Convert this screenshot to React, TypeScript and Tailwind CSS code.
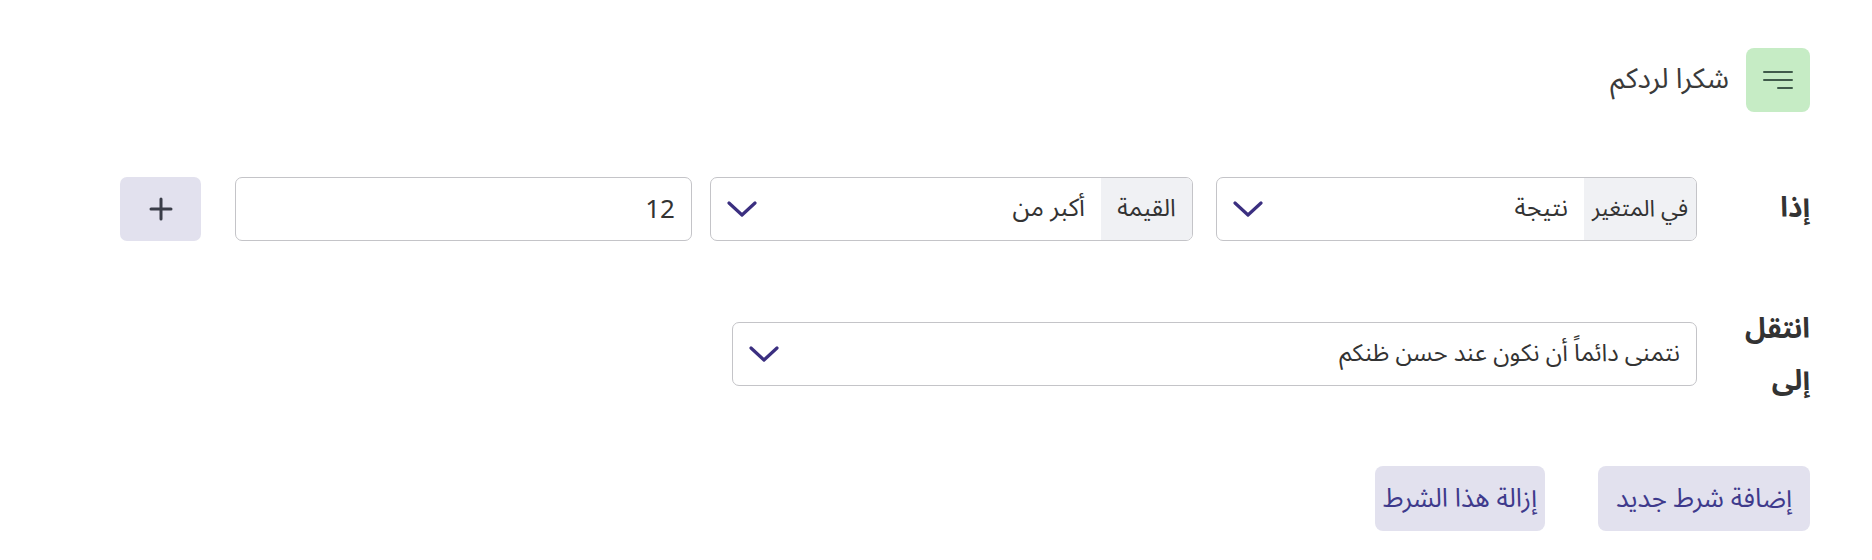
import React from "react";

const font = { fontFamily: '"Noto Sans Arabic", "Noto Sans", "DejaVu Sans", sans-serif' };

function Chevron() {
  return (
    <svg width="30" height="16" viewBox="0 0 30 16" fill="none">
      <path d="M2 2 L15 14 L28 2" stroke="#3b2f80" strokeWidth="3.2" strokeLinecap="round" strokeLinejoin="round" />
    </svg>
  );
}

export default function App() {
  return (
    <div dir="rtl" className="w-[1872px] h-[560px] bg-white pt-[48px] pr-[62px] text-[#333]" style={font}>
      <div className="flex items-center gap-[17px]">
        <div className="w-[64px] h-[64px] rounded-[8px] bg-[#c6ecc5] flex items-center justify-center">
          <svg width="30" height="20" viewBox="0 0 30 20" fill="none">
            <path d="M1 2 H29 M1 10 H29 M15 18 H29" stroke="#3f5a4a" strokeWidth="2" strokeLinecap="round" />
          </svg>
        </div>
        <div className="text-[28px] text-[#3a3a3a]">شكرا لردكم</div>
      </div>

      <div className="flex items-center mt-[65px]">
        <div className="w-[113px] text-[28px] font-bold text-[#333]">إذا</div>
        <div className="w-[481px] h-[64px] border border-[#c4c4c8] rounded-[7px] flex items-stretch overflow-hidden">
          <div className="w-[112px] bg-[#f0f1f4] flex items-center justify-center text-[23px] text-[#333]">في المتغير</div>
          <div className="flex-1 flex items-center justify-between pr-[16px] pl-[16px]">
            <span className="text-[25px] text-[#333]">نتيجة</span>
            <Chevron />
          </div>
        </div>
        <div className="w-[483px] h-[64px] mr-[23px] border border-[#c4c4c8] rounded-[7px] flex items-stretch overflow-hidden">
          <div className="w-[91px] bg-[#f0f1f4] flex items-center justify-center text-[24px] text-[#333]">القيمة</div>
          <div className="flex-1 flex items-center justify-between pr-[16px] pl-[16px]">
            <span className="text-[25px] text-[#333]">أكبر من</span>
            <Chevron />
          </div>
        </div>
        <div className="w-[457px] h-[64px] mr-[18px] border border-[#c4c4c8] rounded-[7px] flex items-center pr-[16px] text-[26px] text-[#333]">
          12
        </div>
        <div className="w-[81px] h-[64px] mr-[34px] rounded-[7px] bg-[#e2e1ee] flex items-center justify-center">
          <svg width="24" height="24" viewBox="0 0 24 24" fill="none">
            <path d="M12 2 V22 M2 12 H22" stroke="#3a3d48" strokeWidth="3" strokeLinecap="round" />
          </svg>
        </div>
      </div>

      <div className="flex items-start mt-[63px]">
        <div className="w-[113px] text-[28px] font-bold text-[#333] flex flex-col">
          <span className="leading-[52px]">انتقل</span>
          <span className="leading-[52px]">إلى</span>
        </div>
        <div className="w-[965px] h-[64px] mt-[18px] border border-[#c4c4c8] rounded-[7px] flex items-center justify-between pr-[16px] pl-[16px]">
          <span className="text-[24px] text-[#333]">نتمنى دائماً أن نكون عند حسن ظنكم</span>
          <Chevron />
        </div>
      </div>

      <div className="flex items-center gap-[53px] mt-[58px]">
        <button className="w-[212px] h-[65px] rounded-[8px] bg-[#e2e1ee] text-[26px] text-[#3e3a8c] flex items-center justify-center" style={font}>إضافة شرط جديد</button>
        <button className="w-[170px] h-[65px] rounded-[8px] bg-[#e2e1ee] text-[26px] text-[#3e3a8c] flex items-center justify-center" style={font}>إزالة هذا الشرط</button>
      </div>
    </div>
  );
}
